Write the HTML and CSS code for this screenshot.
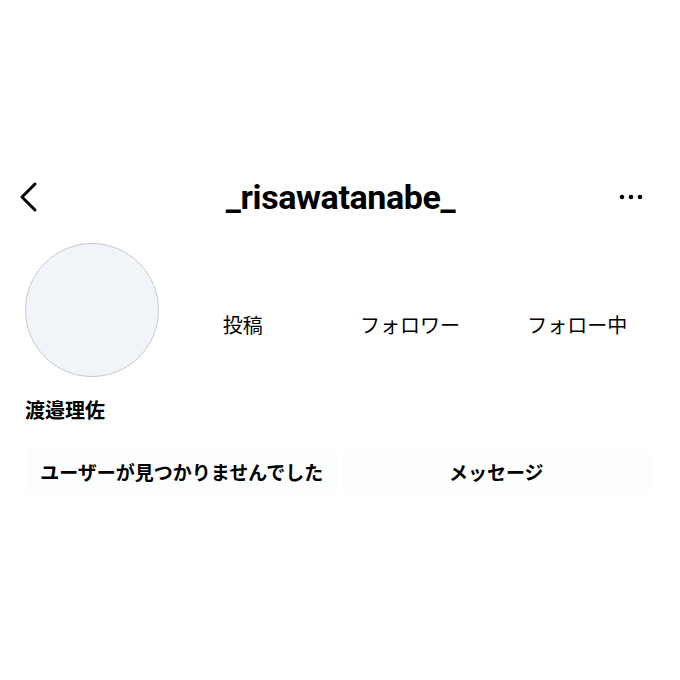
FILE: index.html
```html
<!DOCTYPE html>
<html lang="ja">
<head>
<meta charset="utf-8">
<link rel="stylesheet" href="styles.css">
</head>
<body>
<div class="page">
  <header class="topbar">
    <svg class="back" width="22" height="32" viewBox="0 0 22 32"><path d="M17 3 L4 16 L17 29" fill="none" stroke="#000" stroke-width="3" stroke-linecap="round" stroke-linejoin="round"/></svg>
    <h1 class="title">_risawatanabe_</h1>
    <svg class="more" width="24" height="8" viewBox="0 0 24 8"><circle cx="3" cy="4" r="2.3"/><circle cx="12" cy="4" r="2.3"/><circle cx="21" cy="4" r="2.3"/></svg>
  </header>
  <section class="profile">
    <div class="avatar"></div>
    <div class="stats">
      <div class="stat">投稿</div>
      <div class="stat">フォロワー</div>
      <div class="stat">フォロー中</div>
    </div>
  </section>
  <div class="name">渡邉理佐</div>
  <div class="actions">
    <div class="btn">ユーザーが見つかりませんでした</div>
    <div class="btn">メッセージ</div>
  </div>
</div>
</body>
</html>
```

FILE: styles.css
```css
html, body {
  margin: 0;
  padding: 0;
  background: #fff;
}
body {
  font-family: "Noto Sans CJK JP", "Noto Sans", sans-serif;
  color: #000;
  width: 680px;
  height: 680px;
  overflow: hidden;
}
.page {
  padding-top: 178px;
}
.topbar {
  display: flex;
  align-items: center;
  justify-content: space-between;
  height: 38px;
  padding: 0 37px 0 18px;
}
.back {
  display: block;
}
.title {
  margin: 0 0 0 22px;
  font-family: Roboto, "Liberation Sans", sans-serif;
  font-weight: 700;
  font-size: 34px;
  letter-spacing: -0.4px;
  line-height: 38px;
}
.more {
  display: block;
  fill: #000;
}
.profile {
  display: flex;
  align-items: center;
  margin-top: 27px;
  padding-left: 25px;
}
.avatar {
  width: 132px;
  height: 132px;
  border-radius: 50%;
  background: #f1f4f9;
  border: 1px solid #c9c9cc;
  flex: none;
}
.stats {
  display: flex;
  margin-left: 0;
  width: 502px;
  padding-top: 30px;
}
.stat {
  flex: 1;
  text-align: center;
  font-size: 20px;
  line-height: 26px;
}
.name {
  margin-top: 20px;
  padding-left: 25px;
  font-weight: 700;
  font-size: 20px;
  line-height: 26px;
}
.actions {
  display: flex;
  gap: 5px;
  margin-top: 25px;
  padding-left: 27px;
  width: 624px;
}
.btn {
  flex: 1;
  height: 46px;
  background: #fcfdfd;
  border-radius: 6px;
  display: flex;
  align-items: center;
  justify-content: center;
  font-weight: 700;
  font-size: 19px;
}
```
